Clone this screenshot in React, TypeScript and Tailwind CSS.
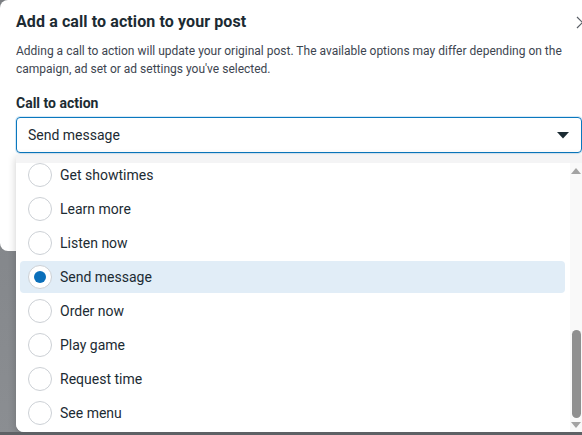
import React from "react";

const options = [
  "Get showtimes",
  "Learn more",
  "Listen now",
  "Send message",
  "Order now",
  "Play game",
  "Request time",
  "See menu",
];

export default function App() {
  const selected = "Send message";
  return (
    <div
      className="relative w-[582px] h-[435px] overflow-hidden bg-gradient-to-b from-[#7c7f83] to-[#8b8e92]"
      style={{ fontFamily: "Roboto, 'Liberation Sans', sans-serif" }}
    >
      {/* modal */}
      <div className="w-[600px] h-[251px] bg-white rounded-lg px-4 pt-[11px]">
        <div className="w-[566px] flex items-center justify-between h-[22px]">
          <h1 className="text-[16px] font-bold text-[#1c2b33] tracking-[0.1px]">
            Add a call to action to your post
          </h1>
          <svg width="13" height="13" viewBox="0 0 13 13" className="-mr-[7px]">
            <path d="M1 1 L12 12 M12 1 L1 12" stroke="#5a5f66" strokeWidth="1.2" />
          </svg>
        </div>
        <p className="mt-[9px] text-[12px] leading-[18px] text-[#3d4550] w-[560px]">
          Adding a call to action will update your original post. The available options may differ depending on the campaign, ad set or ad settings you've selected.
        </p>
        <div className="mt-[15px] text-[14px] font-bold text-[#1c2b33] leading-[20px]">
          Call to action
        </div>
        <div className="mt-[4px] w-[566px] h-[36px] border border-[#0a78be] rounded-[4px] flex items-center justify-between pl-[11px] pr-[12px] shadow-[0_0_0_1px_#d6e9f7]">
          <span className="text-[14px] text-[#1c2b33]">Send message</span>
          <svg width="12" height="7" viewBox="0 0 12 7">
            <path d="M0 0 L12 0 L6 6.5 Z" fill="#1c2b33" />
          </svg>
        </div>
      </div>

      {/* dropdown menu */}
      <div className="absolute left-[16px] top-[155px] w-[566px] h-[277px] bg-[#f4f4f5] rounded-bl-lg shadow-[0_2px_8px_rgba(0,0,0,0.2)]">
        <div className="absolute left-0 right-0 top-[8px] bottom-0 bg-white rounded-bl-lg flex overflow-hidden">
          <div className="flex-1 overflow-hidden pl-[4px] pr-[5px]">
            <div className="-mt-[4px] flex flex-col gap-[2px]">
              {options.map((o) => {
                const sel = o === selected;
                return (
                  <div
                    key={o}
                    className={`h-[32px] flex items-center pl-[8px] rounded-[4px] ${sel ? "bg-[#e1edf7]" : ""}`}
                  >
                    <div className="w-[24px] h-[24px] rounded-full border border-[#ccd0d5] bg-white flex items-center justify-center shrink-0">
                      {sel && <div className="w-[12px] h-[12px] rounded-full bg-[#0a6fba]" />}
                    </div>
                    <span className="ml-[8px] text-[14px] text-[#1c2b33]">{o}</span>
                  </div>
                );
              })}
            </div>
          </div>
          {/* scrollbar */}
          <div className="w-[12px] bg-[#f9f9f9] flex flex-col items-center pt-[5px] pb-[4px]">
            <svg width="10" height="6" viewBox="0 0 10 6">
              <path d="M0 6 L5 0 L10 6 Z" fill="#a3a3a3" />
            </svg>
            <div className="flex-1" />
            <div className="w-[9px] h-[88px] rounded-full bg-[#8f8f8f]" />
            <svg width="10" height="6" viewBox="0 0 10 6" className="mt-[4px]">
              <path d="M0 0 L10 0 L5 6 Z" fill="#a3a3a3" />
            </svg>
          </div>
        </div>
      </div>

      {/* bottom strip */}
      <div className="absolute left-0 right-0 bottom-0 h-[3px] bg-[#5e6165]" />
    </div>
  );
}
